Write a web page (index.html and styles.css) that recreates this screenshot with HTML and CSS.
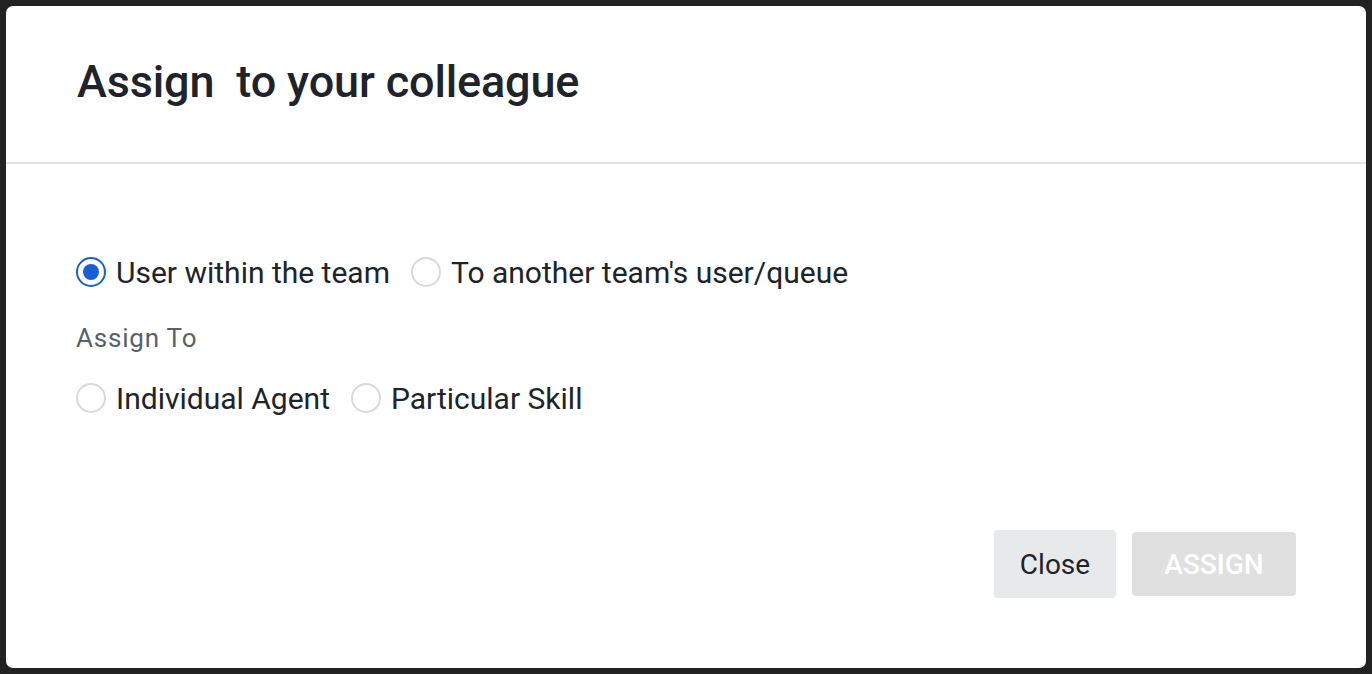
FILE: index.html
```html
<!DOCTYPE html>
<html>
<head>
<meta charset="utf-8">
<link rel="stylesheet" href="styles.css">
</head>
<body>
<div class="backdrop">
  <div class="modal">
    <div class="modal-header">
      <h1 class="title">Assign&nbsp; to your colleague</h1>
    </div>
    <div class="modal-body">
      <div class="radio-row">
        <label class="radio"><span class="circle checked"></span><span class="radio-text">User within the team</span></label>
        <label class="radio"><span class="circle"></span><span class="radio-text">To another team's user/queue</span></label>
      </div>
      <div class="field-label">Assign To</div>
      <div class="radio-row">
        <label class="radio"><span class="circle"></span><span class="radio-text">Individual Agent</span></label>
        <label class="radio"><span class="circle"></span><span class="radio-text">Particular Skill</span></label>
      </div>
    </div>
    <div class="modal-footer">
      <button class="btn btn-close">Close</button>
      <button class="btn btn-assign">ASSIGN</button>
    </div>
  </div>
</div>
</body>
</html>
```
FILE: styles.css
```css
html, body {
  margin: 0;
  padding: 0;
  background: #222222;
  font-family: Roboto, "Liberation Sans", sans-serif;
}
.backdrop {
  width: 1372px;
  height: 674px;
  padding: 6px;
  box-sizing: border-box;
}
.modal {
  background: #ffffff;
  border-radius: 7px;
  height: 662px;
  display: flex;
  flex-direction: column;
}
.modal-header {
  height: 156px;
  border-bottom: 2px solid #e4e4e4;
  display: flex;
  align-items: center;
  padding: 0 70px 0 71px;
}
.title {
  margin: 0;
  font-size: 45px;
  font-weight: 500;
  color: #20242a;
  letter-spacing: -0.15px;
  padding-bottom: 6px;
}
.modal-body {
  padding: 92px 70px 0 70px;
  flex: 1;
}
.radio-row {
  display: flex;
  gap: 21px;
  align-items: center;
  height: 32px;
}
.radio {
  display: flex;
  align-items: center;
  gap: 10px;
}
.circle {
  width: 26px;
  height: 26px;
  border: 2px solid #d9d9d9;
  border-radius: 50%;
  box-sizing: content-box;
  display: flex;
  align-items: center;
  justify-content: center;
}
.circle.checked {
  border-color: #1a5fd8;
}
.circle.checked::after {
  content: "";
  width: 16px;
  height: 16px;
  border-radius: 50%;
  background: #1a5fd8;
}
.radio-text {
  font-size: 30px;
  color: #20242a;
}
.field-label {
  font-size: 26px;
  letter-spacing: 0.8px;
  color: #5b6068;
  margin: 35px 0 29px 0;
  line-height: 30px;
}
.modal-footer {
  display: flex;
  justify-content: flex-end;
  align-items: center;
  gap: 16px;
  padding: 0 70px 70px 0;
}
.btn {
  font-family: Roboto, "Liberation Sans", sans-serif;
  font-size: 28px;
  border: none;
  border-radius: 4px;
  padding: 0;
}
.btn-close {
  width: 122px;
  height: 68px;
  background: #e8e9eb;
  color: #20242a;
}
.btn-assign {
  width: 164px;
  height: 64px;
  background: #e0e0e0;
  color: #ffffff;
  font-weight: 500;
}
```
